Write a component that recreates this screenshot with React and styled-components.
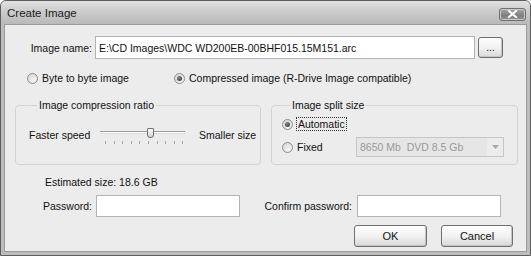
import React from 'react';
import styled, { createGlobalStyle } from 'styled-components';

const GlobalStyle = createGlobalStyle`
  html, body {
    margin: 0;
    padding: 0;
    background: #ffffff;
  }
  body {
    font-family: 'Liberation Sans', Arial, sans-serif;
    font-size: 10.5px;
    color: #111;
  }
`;

const Window = styled.div`
  width: 531px;
  height: 256px;
  box-sizing: border-box;
  border: 1px solid #5e5e5e;
  border-radius: 6px 6px 0 0;
  background: #bdbdbd;
  padding: 0 3px 3px 3px;
  display: flex;
  flex-direction: column;
  overflow: hidden;
`;

const TitleBar = styled.div`
  height: 23px;
  flex-shrink: 0;
  display: flex;
  align-items: center;
  justify-content: space-between;
  background: linear-gradient(#e2e2e2 0%, #cecece 40%, #b9b9b9 100%);
  margin: 0 -3px;
  padding: 0 4px 0 6px;
`;

const Title = styled.span`
  font-size: 11.5px;
  color: #1a1a1a;
`;

const CloseButton = styled.div`
  width: 27px;
  height: 13px;
  margin-top: 3px;
  box-sizing: border-box;
  border: 1px solid #6f6f6f;
  box-shadow: inset 0 0 0 1px #c9c9c9;
  border-radius: 3px;
  background: linear-gradient(#a8a8a8, #7f7f7f 60%, #949494);
  display: flex;
  align-items: center;
  justify-content: center;
`;

const Client = styled.div`
  flex: 1;
  background: #ececec;
  border: 1px solid #9a9a9a;
  display: flex;
  flex-direction: column;
`;

const Row = styled.div`
  display: flex;
  align-items: center;
  padding-left: ${p => p.$left || 0}px;
  margin-top: ${p => p.$top || 0}px;
  gap: ${p => p.$gap || 0}px;
  height: ${p => p.$h ? `${p.$h}px` : 'auto'};
`;

const Label = styled.span`
  width: ${p => p.$w ? `${p.$w}px` : 'auto'};
  box-sizing: border-box;
  padding-right: ${p => p.$pr || 0}px;
  text-align: ${p => p.$right ? 'right' : 'left'};
  white-space: nowrap;
  flex-shrink: 0;
`;

const TextBox = styled.div`
  width: ${p => p.$w}px;
  height: ${p => p.$h || 22}px;
  box-sizing: border-box;
  background: #fff;
  border: 1px solid #b4b4b4;
  display: flex;
  align-items: center;
  padding-left: 3px;
  flex-shrink: 0;
  white-space: nowrap;
`;

const Button = styled.div`
  width: ${p => p.$w}px;
  height: ${p => p.$h || 22}px;
  box-sizing: border-box;
  border: 1px solid #6e6e6e;
  border-radius: 3px;
  background: linear-gradient(#fefefe 0%, #f2f2f2 50%, #d9d9d9 100%);
  box-shadow: inset -1px -1px 0 #c4c4c4;
  display: flex;
  align-items: center;
  justify-content: center;
  flex-shrink: 0;
  font-size: ${p => p.$fs || 11}px;
`;

const RadioItem = styled.div`
  display: flex;
  align-items: center;
  gap: 4px;
  width: ${p => p.$w ? `${p.$w}px` : 'auto'};
  flex-shrink: 0;
`;

const RadioCircle = styled.span`
  width: 11px;
  height: 11px;
  box-sizing: border-box;
  border-radius: 50%;
  border: 1px solid #8d8d8d;
  background: radial-gradient(circle at 65% 70%, #f6f6f6 0%, #d8d8d8 80%);
  display: flex;
  align-items: center;
  justify-content: center;
  flex-shrink: 0;

  &::after {
    content: '';
    display: ${p => p.$checked ? 'block' : 'none'};
    width: 5px;
    height: 5px;
    border-radius: 50%;
    background: radial-gradient(circle at 40% 35%, #8a8a8a, #2a2a2a);
  }
`;

const FocusText = styled.span`
  outline: 1px dotted #333;
  padding: 0 1px;
`;

const GroupsRow = styled.div`
  display: flex;
  padding-left: 10px;
  gap: 10px;
  margin-top: 13px;
`;

const Group = styled.fieldset`
  margin: 0;
  width: ${p => p.$w}px;
  height: 66px;
  box-sizing: border-box;
  border: 1px solid #d2d2d2;
  border-radius: 4px;
  padding: 0 0 0 ${p => p.$pl}px;
  display: flex;
  flex-direction: column;
`;

const Legend = styled.legend`
  padding: 0 2px;
  margin-left: 8px;
  line-height: 13px;
`;

const SliderRow = styled.div`
  display: flex;
  align-items: center;
  margin-top: 13px;
`;

const Slider = styled.div`
  position: relative;
  width: 85px;
  height: 20px;
  margin-right: 14px;
  flex-shrink: 0;
`;

const Track = styled.div`
  position: absolute;
  left: 0;
  right: 0;
  top: 6px;
  height: 1px;
  background: #ffffff;
  border-top: 1px solid #9a9a9a;
  border-bottom: 1px solid #dcdcdc;
`;

const Thumb = styled.div`
  position: absolute;
  left: 47px;
  top: 3px;
  width: 5px;
  height: 8px;
  border: 1px solid #707070;
  border-radius: 1px 1px 3px 3px;
  background: linear-gradient(#fbfbfb, #d4d4d4);
`;

const Ticks = styled.div`
  position: absolute;
  left: 5px;
  right: 1px;
  top: 16px;
  height: 3px;
  background: repeating-linear-gradient(90deg, #a4a4a4 0 1px, transparent 1px 8.6px);
`;

const SplitOption = styled.div`
  display: flex;
  align-items: center;
  height: ${p => p.$h}px;
  margin-top: ${p => p.$top}px;
`;

const Select = styled.div`
  width: 148px;
  height: 20px;
  box-sizing: border-box;
  margin-left: 33px;
  border: 1px solid #c6c6c6;
  background: #e6e6e6;
  color: #9a9a9a;
  display: flex;
  align-items: center;
  justify-content: space-between;
  padding-left: 3px;
  flex-shrink: 0;
`;

const SelectArrow = styled.span`
  width: 16px;
  height: 18px;
  background: #ececec;
  display: flex;
  align-items: center;
  justify-content: center;
`;

export default function App() {
  return (
    <>
      <GlobalStyle />
      <Window>
        <TitleBar>
          <Title>Create Image</Title>
          <CloseButton>
            <svg width="11" height="8" viewBox="0 0 11 8">
              <path d="M2 1 L9 7 M9 1 L2 7" stroke="#ffffff" strokeWidth="2" strokeLinecap="square" />
            </svg>
          </CloseButton>
        </TitleBar>
        <Client>
          <Row $top={11} $gap={3}>
            <Label $w={87} $right>Image name:</Label>
            <TextBox $w={380} $h={23}>E:\CD Images\WDC WD200EB-00BHF015.15M151.arc</TextBox>
            <Button $w={25} $h={21} $fs={10}>...</Button>
          </Row>

          <Row $top={11} $left={22} $h={16}>
            <RadioItem $w={147}>
              <RadioCircle />
              <span>Byte to byte image</span>
            </RadioItem>
            <RadioItem>
              <RadioCircle $checked />
              <span>Compressed image (R-Drive Image compatible)</span>
            </RadioItem>
          </Row>

          <GroupsRow>
            <Group $w={246} $pl={13}>
              <Legend>Image compression ratio</Legend>
              <SliderRow>
                <Label $w={71}>Faster speed</Label>
                <Slider>
                  <Track />
                  <Thumb />
                  <Ticks />
                </Slider>
                <Label>Smaller size</Label>
              </SliderRow>
            </Group>
            <Group $w={247} $pl={10}>
              <Legend>Image split size</Legend>
              <SplitOption $top={3} $h={18}>
                <RadioItem>
                  <RadioCircle $checked />
                  <FocusText>Automatic</FocusText>
                </RadioItem>
              </SplitOption>
              <SplitOption $top={4} $h={20}>
                <RadioItem $w={41}>
                  <RadioCircle />
                  <span>Fixed</span>
                </RadioItem>
                <Select>
                  <span>8650 Mb&nbsp; DVD 8.5 Gb</span>
                  <SelectArrow>
                    <svg width="7" height="4" viewBox="0 0 7 4">
                      <path d="M0 0 H7 L3.5 4 Z" fill="#a8a8a8" />
                    </svg>
                  </SelectArrow>
                </Select>
              </SplitOption>
            </Group>
          </GroupsRow>

          <Row $top={11} $left={40}>
            <Label>Estimated size: 18.6 GB</Label>
          </Row>

          <Row $top={7} $left={38}>
            <Label $w={53}>Password:</Label>
            <TextBox $w={144} />
            <Label $w={117} $pr={5} $right>Confirm password:</Label>
            <TextBox $w={144} />
          </Row>

          <Row $top={8} $left={349} $gap={14}>
            <Button $w={73}>OK</Button>
            <Button $w={72}>Cancel</Button>
          </Row>
        </Client>
      </Window>
    </>
  );
}
